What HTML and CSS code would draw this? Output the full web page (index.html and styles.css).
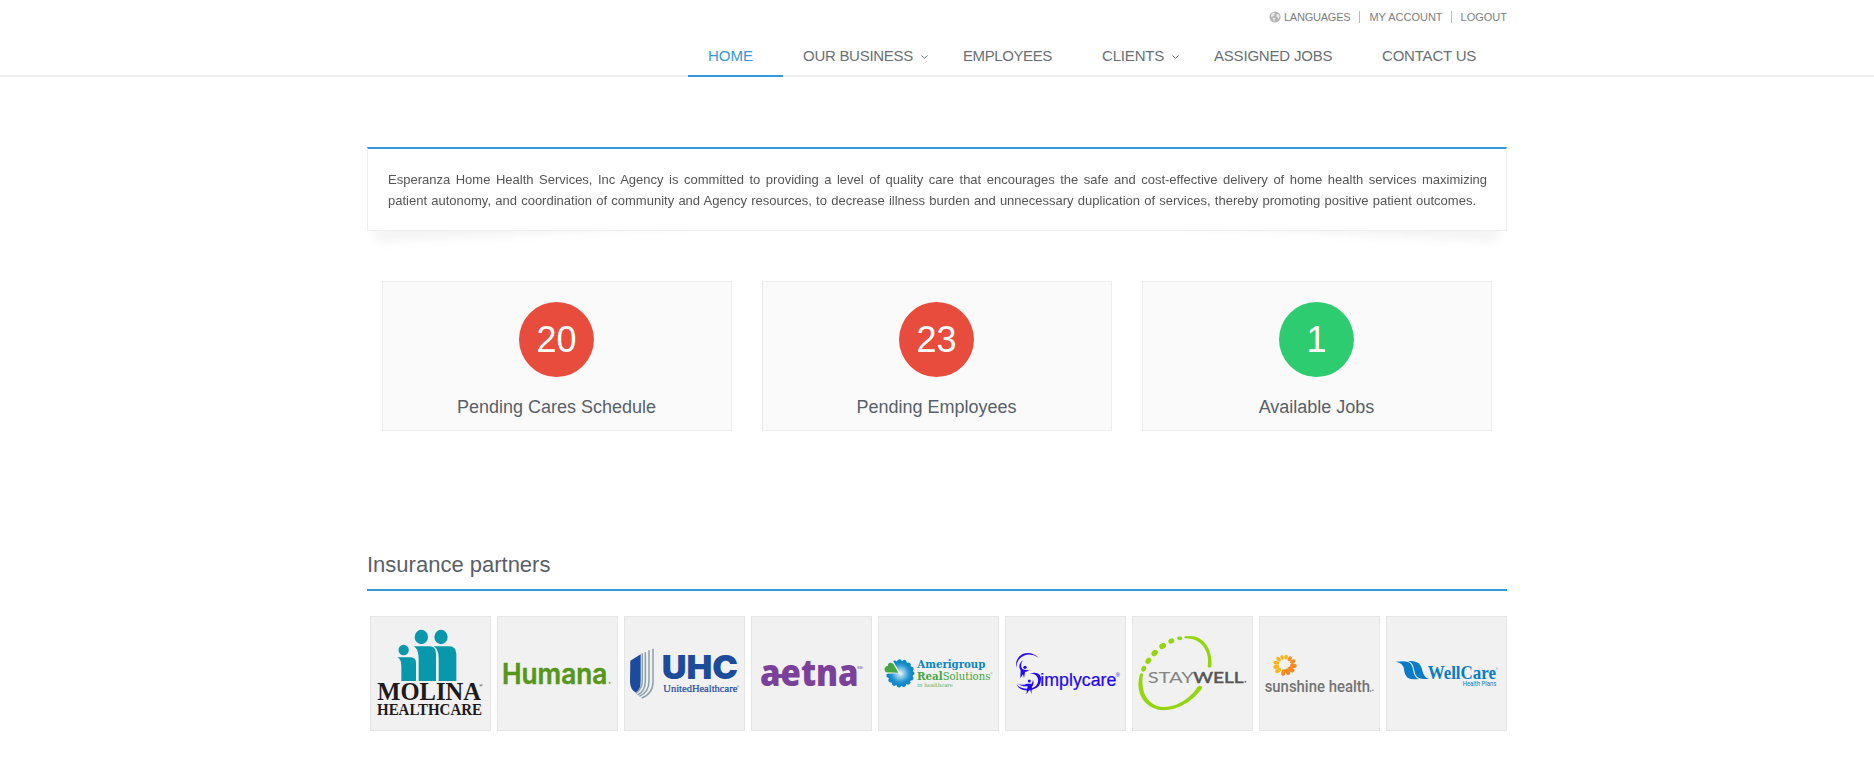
FILE: index.html
```html
<!DOCTYPE html>
<html lang="en">
<head>
<meta charset="utf-8">
<title>Esperanza Home Health Services</title>
<link rel="stylesheet" href="styles.css">
</head>
<body>
<header class="header">
  <div class="container">
    <ul class="topbar">
      <li class="languages"><svg class="globe" viewBox="0 0 12 12"><circle cx="6" cy="6" r="5.6" fill="#b5b5b5"/><path d="M2 4.200 3 2.600l2-1 1 .7-.7 1 .5.500-1.300 1.200-1 .300-.5.900-.9-.4zM4 6.500l1.800.6.8 1-.9 1-.5 1.600-.8-.9-.1-1.500-.8-.8zM7.800 3.400l1.200-.7 1.200 1.300.4 1.500-.7 1.700-.7.700-.6-1.500-1-.7-.3-1.200z" fill="#e9e9e9"/></svg>LANGUAGES</li>
      <li class="account">MY ACCOUNT</li>
      <li class="logout">LOGOUT</li>
    </ul>
    <nav class="nav">
      <a class="nav-item active">HOME</a>
      <a class="nav-item business">OUR BUSINESS<svg class="chevron" viewBox="0 0 7 4"><path d="M.5.5l3 2.8 3-2.8"/></svg></a>
      <a class="nav-item employees">EMPLOYEES</a>
      <a class="nav-item clients">CLIENTS<svg class="chevron" viewBox="0 0 7 4"><path d="M.5.5l3 2.8 3-2.8"/></svg></a>
      <a class="nav-item jobs">ASSIGNED JOBS</a>
      <a class="nav-item contact">CONTACT US</a>
    </nav>
  </div>
</header>
<main class="container">
  <section class="intro"><p class="intro-text"><span class="line">Esperanza Home Health Services, Inc Agency is committed to providing a level of quality care that encourages the safe and cost-effective delivery of home health services maximizing</span> <span class="line last">patient autonomy, and coordination of community and Agency resources, to decrease illness burden and unnecessary duplication of services, thereby promoting positive patient outcomes.</span></p></section>

  <section class="stats">
    <div class="stat"><span class="count red">20</span><h2 class="stat-label">Pending Cares Schedule</h2></div>
    <div class="stat"><span class="count red">23</span><h2 class="stat-label">Pending Employees</h2></div>
    <div class="stat"><span class="count green">1</span><h2 class="stat-label">Available Jobs</h2></div>
  </section>

  <h2 class="heading">Insurance partners</h2>
  <section class="partners">
    <svg class="partner" viewBox="30 228 363 345">
      <g fill="#0798ab">
        <ellipse cx="184" cy="291" rx="20" ry="21.500"/><ellipse cx="243" cy="291" rx="20" ry="21.500"/><circle cx="131" cy="330" r="15.500"/>
        <path d="M112 352h40q16 1 16 17v54h-44v-42q0-24-12-29zM161 319h48q19 1 19 22v82h-52v-67q0-30-15-37zM221 319h47q20 1 21 22v82h-53v-67q0-30-15-37z"/>
      </g>
      <g fill="#1d1b1c" font-family="Liberation Serif" font-weight="700">
        <text x="52" y="481" font-size="77" textLength="311" lengthAdjust="spacingAndGlyphs">MOLINA</text>
        <text x="51" y="524" font-size="47" textLength="315" lengthAdjust="spacingAndGlyphs">HEALTHCARE</text>
        <text x="357" y="442" font-size="15">®</text>
      </g>
    </svg>
    <svg class="partner" viewBox="411 228 363 345">
      <text x="426" y="431" font-family="Inter" font-size="85" font-weight="600" fill="#55961b" stroke="#55961b" stroke-width="1.500" textLength="316" lengthAdjust="spacingAndGlyphs">Humana</text>
      <circle cx="749" cy="428" r="3" fill="#7dab50"/>
    </svg>
    <svg class="partner" viewBox="12 33 363 345">
      <path d="M31 167l31-19v79q0 26-12 37-20-8-20-35z" fill="#1c4b9b"/>
      <g fill="none" stroke="#8ca0ac" stroke-width="4.500"><path d="M67 145v81q0 26-20 39M76 141v86q0 30-23 43M87 136v92q0 34-29 46M99 131v99q0 36-34 49"/></g>
      <text x="125" y="221" font-family="Inter" font-size="98" font-weight="900" fill="#1c4b9b" textLength="229" lengthAdjust="spacingAndGlyphs">UHC</text>
      <text x="130" y="262" font-family="Liberation Serif" font-size="34" fill="#1c4b9b" stroke="#1c4b9b" stroke-width=".7" textLength="222" lengthAdjust="spacingAndGlyphs">UnitedHealthcare</text>
      <text x="351" y="248" font-family="Liberation Sans" font-size="8" fill="#1c4b9b">®</text>
    </svg>
    <svg class="partner" viewBox="393 33 363 345">
      <text x="420" y="242" font-family="Open Sans" font-size="112" font-weight="800" fill="#7b419a" textLength="296" lengthAdjust="spacingAndGlyphs">aetna</text>
      <path d="M465 207h30v12h-30z" fill="#7b419a"/>
      <text x="711" y="191" font-family="Liberation Sans" font-size="11" fill="#7b419a">SM</text>
    </svg>
    <svg class="partner" viewBox="24 33 363 345">
      <defs><radialGradient id="flower"><stop offset="0" stop-color="#f3fbff"/><stop offset=".22" stop-color="#a5d8f1"/><stop offset=".7" stop-color="#2594cf"/><stop offset="1" stop-color="#0784c5"/></radialGradient></defs>
      <circle cx="91" cy="205" r="36" fill="none" stroke="#0f88c8" stroke-width="13" stroke-linecap="round" stroke-dasharray=".1 14.980"/>
      <circle cx="91" cy="205" r="38" fill="url(#flower)"/>
      <path d="M91 205L48 206 42 184 68 166z" fill="#f1f1f1"/>
      <path d="M85 203l-37-1q-8-7-2-15 2-4 8-5-1-8 7-9 9-1 11 8z" fill="#46a63f"/>
      <g font-family="DejaVu Serif">
        <text x="142" y="190" font-size="33" font-weight="700" fill="#0784c5" textLength="204" lengthAdjust="spacingAndGlyphs">Amerigroup</text>
        <text x="141" y="224" font-size="34" font-weight="700" fill="#46a63f" textLength="77" lengthAdjust="spacingAndGlyphs">Real</text>
        <text x="218" y="224" font-size="34" fill="#46a63f" textLength="143" lengthAdjust="spacingAndGlyphs">Solutions</text>
        <text x="142" y="245" font-size="17" fill="#5cb055" textLength="107" lengthAdjust="spacingAndGlyphs">in healthcare</text>
        <text x="361" y="208" font-size="7" fill="#46a63f">®</text>
      </g>
    </svg>
    <svg class="partner" viewBox="405 33 363 345">
      <g fill="#2408f5">
        <path d="M439 188q-5-28 19-41 24-10 49 11-26-15-46-6-21 9-22 36zM438 236q13 18 44 15 25-7 22-29-4-16-25-17 29-7 34 13 2 29-27 36-34 9-48-18z"/>
        <circle cx="465" cy="187" r="5"/><circle cx="478" cy="228" r="4.500"/>
        <path d="M460 164q-12 14-3 28 9 5 22 2-9 7-14 7l-3 19-3-12-8 12 1-24q-11-18 8-32zM440 234q15 10 30 2l15 0q6-7 3-14 6 13-2 23l-2 22-4-15-11 16 4-24q-20 1-33-10z"/>
      </g>
      <text x="511" y="243" font-family="Liberation Sans" font-size="53" fill="#2408f5" stroke="#2408f5" stroke-width=".7" textLength="228" lengthAdjust="spacingAndGlyphs">implycare</text>
      <text x="737" y="215" font-family="Liberation Sans" font-size="17" fill="#2408f5">®</text>
    </svg>
    <svg class="partner" viewBox="36 33 363 345">
      <g fill="#93d60c">
        <path d="M195 94q50-8 72 40 10 25 7 51-5 5-11 1 4-29-5-47-17-39-63-39-5-3 0-6zM60 207q5-5 9 0-9 61 26 87 27 21 73 5 43-18 65-54 7-6 13 1 0 5-4 10-35 43-80 55-53 14-84-16-33-33-18-88z"/>
        <ellipse cx="179" cy="100" rx="8" ry="5.500"/><ellipse cx="154" cy="108" rx="9" ry="7.500" transform="rotate(-20 154 108)"/><ellipse cx="128" cy="123" rx="10.500" ry="8.500" transform="rotate(-28 128 123)"/><ellipse cx="104" cy="144" rx="10.500" ry="8.500" transform="rotate(-45 104 144)"/><ellipse cx="85" cy="167" rx="10" ry="8" transform="rotate(-55 85 167)"/><ellipse cx="71" cy="191" rx="9" ry="7" transform="rotate(-65 71 191)"/>
      </g>
      <g font-family="Lato" font-size="46">
        <text x="83" y="233" fill="#858585" textLength="139" lengthAdjust="spacingAndGlyphs">STAY</text>
        <text x="220" y="233" fill="#555" stroke="#555" stroke-width="1.500" textLength="151" lengthAdjust="spacingAndGlyphs">WELL</text>
      </g>
      <circle cx="376" cy="230" r="3" fill="#777"/>
    </svg>
    <svg class="partner" viewBox="417 33 363 345">
      <g transform="translate(494 181)">
        <g fill="#fbb615"><ellipse cx="0" cy="-25" rx="5.500" ry="7" transform="rotate(10)"/><ellipse cx="0" cy="-25" rx="5" ry="7" transform="rotate(-18)"/><ellipse cx="0" cy="-26" rx="5.500" ry="8" transform="rotate(-45)"/><ellipse cx="0" cy="-26" rx="5.500" ry="9" transform="rotate(-73)"/><ellipse cx="0" cy="-26" rx="6" ry="9" transform="rotate(-100)"/><ellipse cx="0" cy="-25" rx="6.500" ry="10" transform="rotate(-128)"/></g>
        <g fill="#f68a1f"><ellipse cx="0" cy="-25" rx="5.500" ry="8" transform="rotate(38)"/><ellipse cx="0" cy="-27" rx="5.500" ry="9" transform="rotate(65)"/><ellipse cx="0" cy="-26" rx="6.500" ry="10" transform="rotate(93)"/><ellipse cx="0" cy="-23" rx="7" ry="11" transform="rotate(123)"/><ellipse cx="0" cy="-21" rx="7" ry="10" transform="rotate(155)"/><ellipse cx="0" cy="-22" rx="6.500" ry="10" transform="rotate(190)"/></g>
      </g>
      <text x="434" y="260" font-family="Roboto" font-size="52" font-weight="500" fill="#737373" textLength="316" lengthAdjust="spacingAndGlyphs">sunshine health</text>
      <path d="M750 256h4v4h-4zM756 254h6v3h-6z" fill="#888"/>
    </svg>
    <svg class="partner" viewBox="48 33 363 345">
      <path d="M77 170q24-3 37 1 12 4 15 23 3 23 18 28-24 3-34-4-10-8-11-25-2-19-25-23zM114 168q27-2 36 11 5 7 8 21 4 17 19 22-26 2-36-7-7-7-9-22-2-20-18-25z" fill="#087cc6"/>
      <text x="173" y="221" font-family="Liberation Serif" font-size="57" font-weight="700" fill="#087cc6" textLength="205" lengthAdjust="spacingAndGlyphs">WellCare</text>
      <text x="377" y="196" font-family="Liberation Sans" font-size="8" fill="#087cc6">®</text>
      <text x="278" y="242" font-family="Roboto" font-size="19" fill="#087cc6" textLength="101" lengthAdjust="spacingAndGlyphs">Health Plans</text>
    </svg>
  </section>
</main>
</body>
</html>
```
FILE: styles.css
```css
* { box-sizing: border-box; }
body { margin: 0; background: #fff; color: #555; font: 13px/21px "Liberation Sans", Arial, sans-serif; }
h2, p, ul { margin: 0; padding: 0; font-weight: 400; }
.container { width: 1140px; margin: 0 auto; }

.header { height: 77px; border-bottom: 2px solid #eee; }
.topbar { display: flex; justify-content: flex-end; height: 37px; padding-top: 11px; list-style: none; font-size: 11px; line-height: 12px; color: #7c8082; }
.topbar li { height: 12px; white-space: nowrap; }
.languages { display: flex; padding-right: 9px; letter-spacing: -.22px; }
.globe { width: 12px; height: 12px; margin-right: 3px; }
.account { padding: 0 8px 0 9px; border-left: 1px solid #bbb; border-right: 1px solid #bbb; }
.logout { padding-left: 9px; }
.nav { display: flex; justify-content: flex-end; }
.nav-item { position: relative; width: 95px; height: 40px; padding: 9px 0 0 20px; border-bottom: 2px solid transparent; color: #687074; font-size: 15px; line-height: 20px; white-space: nowrap; }
.nav-item.active { color: #3498db; border-color: #3498db; }
.business { width: 160px; letter-spacing: -.28px; }
.employees { width: 139px; letter-spacing: -.4px; }
.clients { width: 112px; letter-spacing: -.17px; }
.jobs { width: 168px; letter-spacing: -.2px; }
.contact { width: 145px; letter-spacing: -.2px; }
.chevron { position: absolute; right: 15px; top: 18px; width: 7px; height: 4px; fill: none; stroke: #687074; }

.intro { position: relative; height: 84px; margin-top: 70px; padding: 20px 20px 0; border: 1px solid #eee; border-top: 2px solid #3498db; background: #fff; z-index: 0; transform-style: preserve-3d; }
.intro::before, .intro::after { content: ""; position: absolute; bottom: 14px; width: 50%; height: 16px; box-shadow: 0 11px 12px #f3f3f3; }
.intro::before { left: 6px; transform: translateZ(-50px) rotate(-3deg); }
.intro::after { right: 6px; transform: translateZ(-50px) rotate(3deg); }
.intro-text { width: 1099px; }
.line { display: block; text-align: justify; text-align-last: justify; white-space: normal; }
.line.last { width: 1088px; }

.stats { display: grid; grid-template-columns: repeat(3, 350px); justify-content: center; gap: 30px; margin-top: 50px; }
.stat { display: flex; flex-direction: column; align-items: center; height: 150px; padding: 20px 1px 0 0; background: #fafafa; border: 1px solid #eee; }
.count { width: 75px; height: 75px; border-radius: 50%; color: #fff; font-size: 36px; line-height: 75px; text-align: center; }
.red { background: #e74c3c; }
.green { background: #2ecc71; }
.stat-label { margin-top: 18px; color: #585f69; font-size: 18px; line-height: 24px; }

.heading { height: 47px; margin-top: 113px; padding-top: 5px; border-bottom: 2px solid #3498db; color: #585f69; font-size: 22px; line-height: 32px; }
.partners { display: flex; gap: 6px; margin-top: 25px; padding-left: 3px; }
.partner { width: 121px; height: 115px; background: #f1f1f1; outline: 1px solid #e5e5e5; outline-offset: -1px; }
```
